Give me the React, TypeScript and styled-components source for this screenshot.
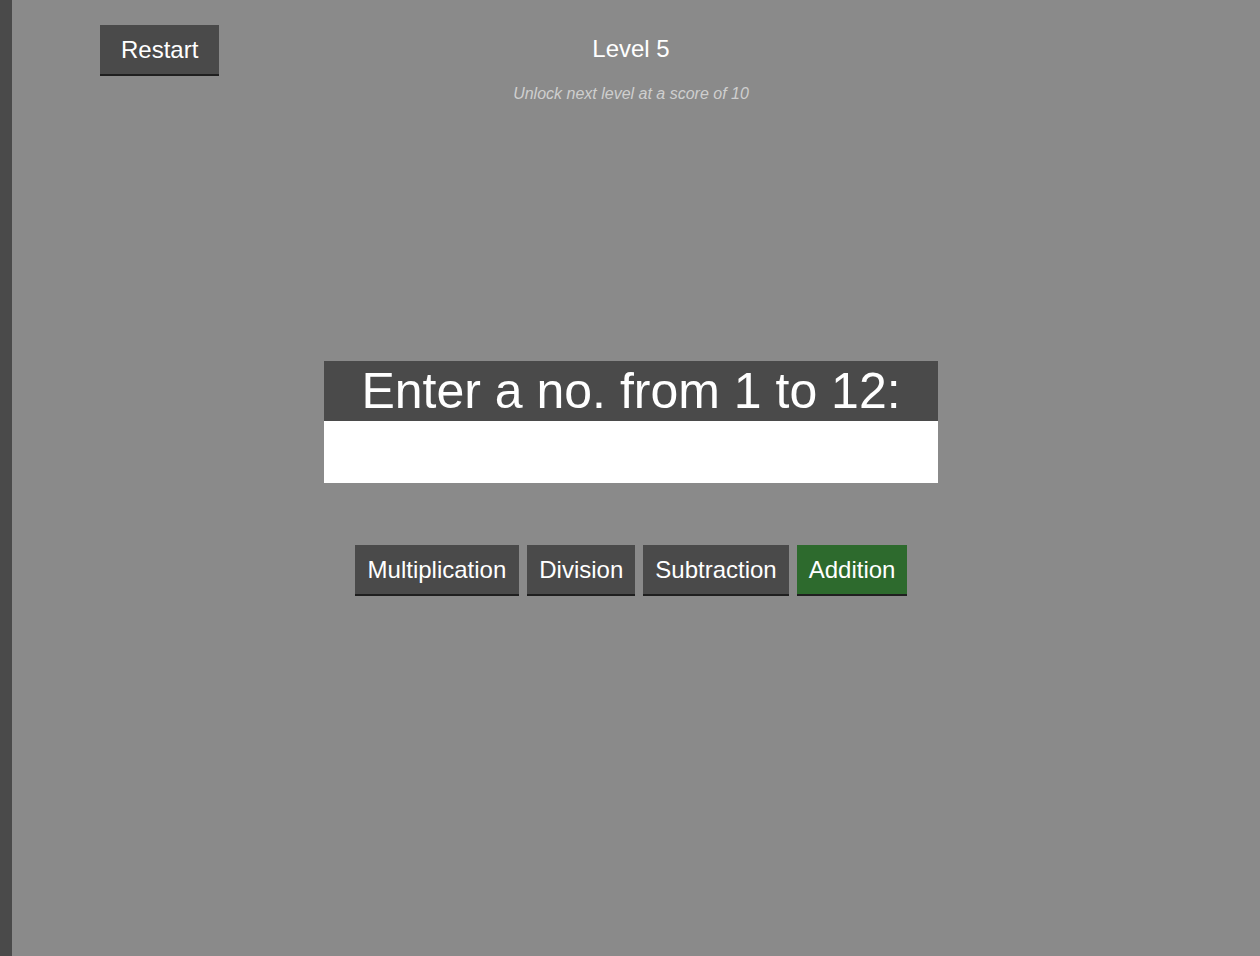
import React, { useState } from "react"
import styled, { createGlobalStyle } from "styled-components"

const GlobalStyle = createGlobalStyle`
	html, body {
		margin: 0;
		padding: 0;
		background: #8a8a8a;
		font-family: "Liberation Sans", Arial, sans-serif;
	}
`

const operations = ["Multiplication", "Division", "Subtraction", "Addition"]

const App: React.FC = () => {
	const [operation, setOperation] = useState("Addition")
	const [value, setValue] = useState("")

	return (
		<Page>
			<GlobalStyle />
			<Header>
				<div>
					<Button onClick={() => setValue("")} $wide>
						Restart
					</Button>
				</div>
				<LevelInfo>
					<h2>Level 5</h2>
					<p>Unlock next level at a score of 10</p>
				</LevelInfo>
				<div />
			</Header>

			<Question>
				<h1>Enter a no. from 1 to 12:</h1>
				<input value={value} onChange={(e) => setValue(e.target.value)} />
			</Question>

			<Operations>
				{operations.map((op) => (
					<Button key={op} $active={op === operation} onClick={() => setOperation(op)}>
						{op}
					</Button>
				))}
			</Operations>
		</Page>
	)
}

const Page = styled.div`
	min-height: 956px;
	box-sizing: border-box;
	border-left: 12px solid #4a4a4a;
	display: flex;
	flex-direction: column;
	align-items: center;
	margin-right: 10px;
`

const Header = styled.header`
	width: 100%;
	display: grid;
	grid-template-columns: 1fr auto 1fr;
	padding-top: 25px;
	div:first-child {
		padding-left: 88px;
	}
`

const LevelInfo = styled.div`
	text-align: center;
	color: #fff;
	h2 {
		margin: 0;
		font-size: 24px;
		font-weight: 400;
		line-height: 48px;
	}
	p {
		margin: 12px 0 0;
		font-size: 16px;
		font-style: italic;
		color: #cfcfcf;
	}
`

const Button = styled.button<{ $active?: boolean; $wide?: boolean }>`
	height: 51px;
	box-sizing: border-box;
	padding: 0 ${({ $wide }) => ($wide ? "21px" : "12px")};
	border: none;
	border-bottom: 2px solid #1f1f1f;
	background: ${({ $active }) => ($active ? "#2d6a2d" : "#4a4a4a")};
	color: #fff;
	font-family: "Liberation Sans", Arial, sans-serif;
	font-size: 24px;
	cursor: pointer;
	&:first-child {
		padding: 0 ${({ $wide }) => ($wide ? "21px" : "13px")};
	}
`

const Question = styled.section`
	margin-top: 258px;
	width: 614px;
	display: flex;
	flex-direction: column;
	h1 {
		margin: 0;
		height: 60px;
		background: #4a4a4a;
		color: #fff;
		font-size: 50px;
		font-weight: 400;
		line-height: 60px;
		text-align: center;
	}
	input {
		height: 62px;
		box-sizing: border-box;
		border: none;
		outline: none;
		background: #fff;
		font-family: "Liberation Sans", Arial, sans-serif;
		font-size: 40px;
		text-align: center;
	}
`

const Operations = styled.nav`
	margin-top: 62px;
	display: flex;
	gap: 8px;
`

export default App
